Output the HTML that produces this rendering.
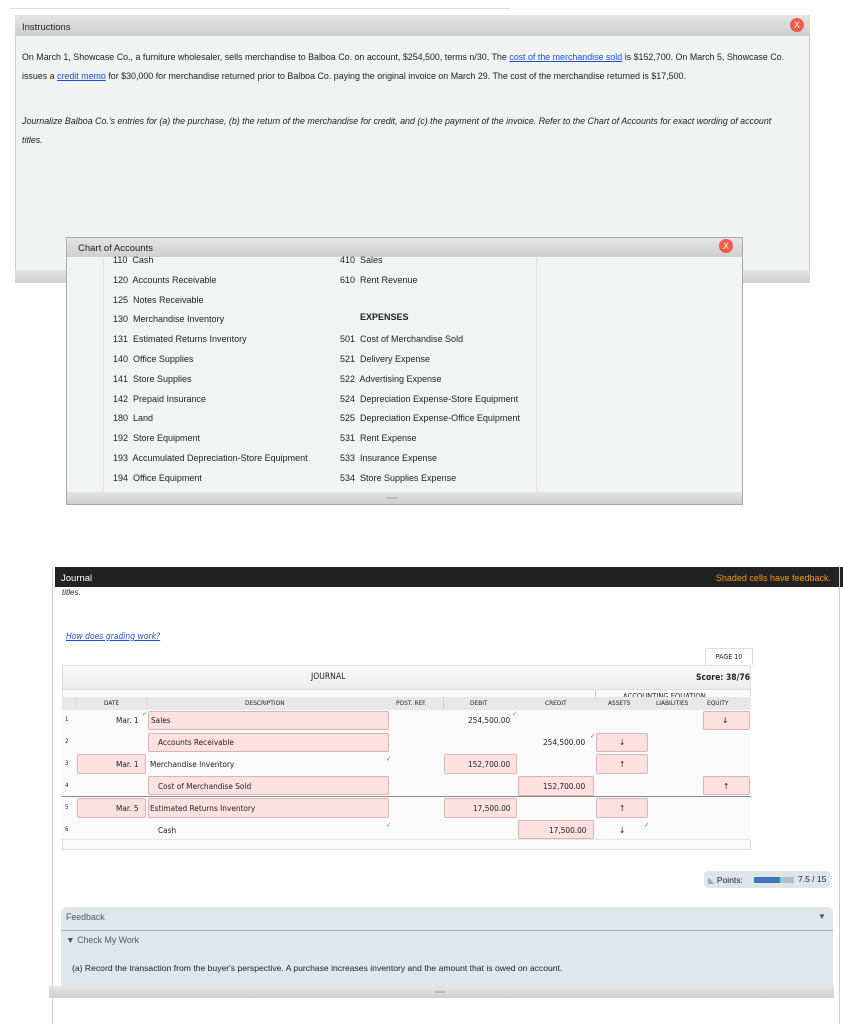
<!DOCTYPE html>
<html><head><meta charset="utf-8"><style>
body{margin:0;width:843px;height:1024px;background:#fff;font-family:"Liberation Sans",sans-serif;position:relative;overflow:hidden;font-size:9px;color:#222}
.a{position:absolute}
.hdr{background:linear-gradient(#e4e4e4,#cfcfcf)}
.x{position:absolute;width:14px;height:14px;border-radius:50%;background:#f25a4a;color:#fff;font-size:9px;text-align:center;line-height:14px}
a{color:#1a4fd8;text-decoration:underline}
.j{font-family:"DejaVu Sans Condensed","Liberation Sans Narrow","Liberation Sans",sans-serif}
.pink{position:absolute;background:#fde1e1;border:1px solid #d9b4b4;border-radius:2px;box-sizing:border-box}
.ck{position:absolute;color:#3a3;font-size:7px}
.row{position:absolute;left:62px;width:689px;border-bottom:1px solid #e6e6e6;background:#fafafa}
</style></head><body>
<div class="a" style="left:10px;top:0;width:500px;height:8px;border-bottom:1px solid #ddd"></div>
<div class="a" style="left:15px;top:15px;width:795px;height:268px;background:#f1f2f2;border:1px solid #ccc;box-sizing:border-box"></div>
<div class="a hdr" style="left:15px;top:15px;width:795px;height:21px"></div>
<div class="a" style="left:22px;top:22px;font-size:9.5px">Instructions</div>
<div class="x" style="left:790px;top:18px">X</div>
<div class="a" style="left:22px;top:48px;width:782px;line-height:18.5px;font-size:8.9px">On March 1, Showcase Co., a furniture wholesaler, sells merchandise to Balboa Co. on account, $254,500, terms n/30. The <a>cost of the merchandise sold</a> is $152,700. On March 5, Showcase Co. issues a <a>credit memo</a> for $30,000 for merchandise returned prior to Balboa Co. paying the original invoice on March 29. The cost of the merchandise returned is $17,500.</div>
<div class="a" style="left:22px;top:112px;width:785px;line-height:18.5px;font-size:8.9px;font-style:italic">Journalize Balboa Co.'s entries for (a) the purchase, (b) the return of the merchandise for credit, and (c) the payment of the invoice. Refer to the Chart of Accounts for exact wording of account<br>titles.</div>
<div class="a hdr" style="left:15px;top:270px;width:795px;height:13px"></div>

<div class="a" style="left:66px;top:237px;width:677px;height:268px;background:#f2f3f3;border:1px solid #aaa;box-sizing:border-box"></div>
<div class="a hdr" style="left:67px;top:238px;width:675px;height:19px"></div>
<div class="a" style="left:78px;top:243px;font-size:9.5px">Chart of Accounts</div>
<div class="x" style="left:719px;top:239px">X</div>
<div class="a" style="left:103px;top:257px;width:1px;height:236px;background:#e2e2e2"></div>
<div class="a" style="left:536px;top:257px;width:1px;height:236px;background:#e2e2e2"></div>
<div class="a" style="left:113px;top:251px;line-height:19.8px;font-size:9px">110&nbsp; Cash<br>120&nbsp; Accounts Receivable<br>125&nbsp; Notes Receivable<br>130&nbsp; Merchandise Inventory<br>131&nbsp; Estimated Returns Inventory<br>140&nbsp; Office Supplies<br>141&nbsp; Store Supplies<br>142&nbsp; Prepaid Insurance<br>180&nbsp; Land<br>192&nbsp; Store Equipment<br>193&nbsp; Accumulated Depreciation-Store Equipment<br>194&nbsp; Office Equipment</div>
<div class="a" style="left:340px;top:251px;line-height:19.8px;font-size:9px">410&nbsp; Sales<br>610&nbsp; Rent Revenue<br><br><b style="padding-left:20px;position:relative;top:-2px">EXPENSES</b><br>501&nbsp; Cost of Merchandise Sold<br>521&nbsp; Delivery Expense<br>522&nbsp; Advertising Expense<br>524&nbsp; Depreciation Expense-Store Equipment<br>525&nbsp; Depreciation Expense-Office Equipment<br>531&nbsp; Rent Expense<br>533&nbsp; Insurance Expense<br>534&nbsp; Store Supplies Expense</div>
<div class="a hdr" style="left:67px;top:492px;width:675px;height:12px"></div>
<div class="a" style="left:386px;top:497px;width:12px;height:2px;background:#bbb"></div>

<div class="a" style="left:52px;top:567px;width:1px;height:457px;background:#ccc"></div>
<div class="a" style="left:55px;top:567px;width:788px;height:20px;background:#222"></div>
<div class="a" style="left:61px;top:573px;color:#fff;font-size:9.5px">Journal</div>
<div class="a" style="right:12px;top:573px;color:#f39a1e;font-size:9px">Shaded cells have feedback.</div>
<div class="a" style="left:62px;top:588px;font-style:italic;font-size:8px">titles.</div>
<div class="a j" style="left:66px;top:632px;font-style:italic;font-size:8.5px"><a>How does grading work?</a></div>

<div class="a j" style="left:705px;top:648px;width:48px;height:17px;border:1px solid #ddd;border-bottom:none;font-size:7px;text-align:center;line-height:17px;box-sizing:border-box">PAGE 10</div>
<div class="a" style="left:62px;top:665px;width:689px;height:185px;border:1px solid #ddd;box-sizing:border-box;background:#fafafa"></div>
<div class="a hdr j" style="left:63px;top:666px;width:687px;height:23px;background:linear-gradient(#fafafa,#ececec);border-bottom:1px solid #ddd"></div>
<div class="a j" style="left:311px;top:672px;font-size:8.5px">JOURNAL</div>
<div class="a j" style="left:696px;top:673px;font-size:8.5px;font-weight:bold">Score: 38/76</div>
<div class="a" style="left:595px;top:690px;width:1px;height:150px;background:#ccc"></div>
<div class="a j" style="left:623px;top:690px;font-size:7.5px;height:8px;overflow:hidden;line-height:13px">ACCOUNTING EQUATION</div>
<div class="a j" style="left:62px;top:697px;width:689px;height:13px;background:#e8e8e8;border-bottom:1px solid #ccc;font-size:6.5px;line-height:13px">
<span class="a" style="left:42px">DATE</span><span class="a" style="left:183px">DESCRIPTION</span><span class="a" style="left:334px">POST. REF.</span><span class="a" style="left:408px">DEBIT</span><span class="a" style="left:483px">CREDIT</span><span class="a" style="left:546px">ASSETS</span><span class="a" style="left:594px">LIABILITIES</span><span class="a" style="left:645px">EQUITY</span></div>
<div class="a" style="left:76px;top:697px;width:1px;height:143px;background:#ddd"></div>
<div class="a" style="left:146px;top:697px;width:1px;height:143px;background:#ddd"></div>
<div class="a" style="left:443px;top:697px;width:1px;height:143px;background:#ccc"></div>

<div class="j">
<div class="row" style="top:710px;height:21px"></div>
<div class="row" style="top:731px;height:22px"></div>
<div class="row" style="top:753px;height:22px"></div>
<div class="row" style="top:775px;height:21px;border-bottom:1px solid #888"></div>
<div class="row" style="top:797px;height:22px"></div>
<div class="row" style="top:819px;height:20px"></div>
<div class="a" style="left:65px;top:709px;font-size:6px;line-height:22px">1<br>2<br>3<br>4<br>5<br>6</div>

<div class="pink" style="left:148px;top:711px;width:241px;height:19px"></div>
<div class="pink" style="left:148px;top:733px;width:241px;height:19px"></div>
<div class="pink" style="left:77px;top:754px;width:69px;height:20px"></div>
<div class="pink" style="left:444px;top:754px;width:73px;height:20px"></div>
<div class="pink" style="left:148px;top:776px;width:241px;height:19px"></div>
<div class="pink" style="left:518px;top:776px;width:76px;height:20px"></div>
<div class="pink" style="left:77px;top:798px;width:69px;height:20px"></div>
<div class="pink" style="left:148px;top:798px;width:241px;height:20px"></div>
<div class="pink" style="left:444px;top:798px;width:73px;height:20px"></div>
<div class="pink" style="left:518px;top:820px;width:76px;height:19px"></div>
<div class="pink" style="left:596px;top:733px;width:52px;height:19px"></div>
<div class="pink" style="left:596px;top:754px;width:52px;height:20px"></div>
<div class="pink" style="left:596px;top:798px;width:52px;height:20px"></div>
<div class="pink" style="left:703px;top:711px;width:47px;height:19px"></div>
<div class="pink" style="left:703px;top:776px;width:47px;height:19px"></div>

<div class="a" style="font-size:8.2px;line-height:22px;left:0;top:709px;width:843px">
<span class="a" style="left:116px;top:0">Mar. 1</span><span class="a" style="left:151px;top:0">Sales</span><span class="a" style="left:468px;top:0">254,500.00</span><span class="a" style="left:722px;top:0">↓</span>
<span class="a" style="left:158px;top:22px">Accounts Receivable</span><span class="a" style="left:543px;top:22px">254,500.00</span><span class="a" style="left:619px;top:22px">↓</span>
<span class="a" style="left:116px;top:44px">Mar. 1</span><span class="a" style="left:150px;top:44px">Merchandise Inventory</span><span class="a" style="left:468px;top:44px">152,700.00</span><span class="a" style="left:619px;top:44px">↑</span>
<span class="a" style="left:158px;top:66px">Cost of Merchandise Sold</span><span class="a" style="left:543px;top:66px">152,700.00</span><span class="a" style="left:723px;top:66px">↑</span>
<span class="a" style="left:116px;top:88px">Mar. 5</span><span class="a" style="left:150px;top:88px">Estimated Returns Inventory</span><span class="a" style="left:473px;top:88px">17,500.00</span><span class="a" style="left:619px;top:88px">↑</span>
<span class="a" style="left:158px;top:110px">Cash</span><span class="a" style="left:549px;top:110px">17,500.00</span><span class="a" style="left:619px;top:110px">↓</span>
</div>
<span class="ck" style="left:142px;top:710px">✓</span><span class="ck" style="left:386px;top:755px">✓</span><span class="ck" style="left:386px;top:821px">✓</span><span class="ck" style="left:512px;top:710px">✓</span><span class="ck" style="left:590px;top:732px">✓</span><span class="ck" style="left:644px;top:821px">✓</span>
</div>

<div class="a" style="left:704px;top:871px;width:126px;height:17px;background:#dde5ea;border-radius:4px"></div>
<div class="a" style="left:708px;top:875px;font-size:8.5px"><span style="color:#9ab">◣</span> Points:</div>
<div class="a" style="left:754px;top:877px;width:40px;height:6px;background:#a9c1d3"></div>
<div class="a" style="left:754px;top:877px;width:26px;height:6px;background:#3a78b8"></div>
<div class="a" style="left:798px;top:874px;font-size:8.5px">7.5 / 15</div>

<div class="a" style="left:61px;top:907px;width:772px;height:80px;background:#dfe7ea;border-radius:5px 5px 0 0"></div>
<div class="a" style="left:61px;top:930px;width:772px;height:1px;background:#9fb3b9"></div>
<div class="a" style="left:66px;top:912px;font-size:8.8px;color:#556">Feedback</div>
<div class="a" style="left:818px;top:912px;font-size:8px;color:#556">▼</div>
<div class="a" style="left:66px;top:935px;font-size:8.8px;color:#556">▼ Check My Work</div>
<div class="a" style="left:72px;top:963px;font-size:8.6px">(a) Record the transaction from the buyer's perspective. A purchase increases inventory and the amount that is owed on account.</div>
<div class="a hdr" style="left:49px;top:986px;width:785px;height:12px"></div>
<div class="a" style="left:435px;top:991px;width:10px;height:2px;background:#bbb"></div>
<div class="a" style="left:839px;top:567px;width:1px;height:457px;background:#ccc"></div>
</body></html>
